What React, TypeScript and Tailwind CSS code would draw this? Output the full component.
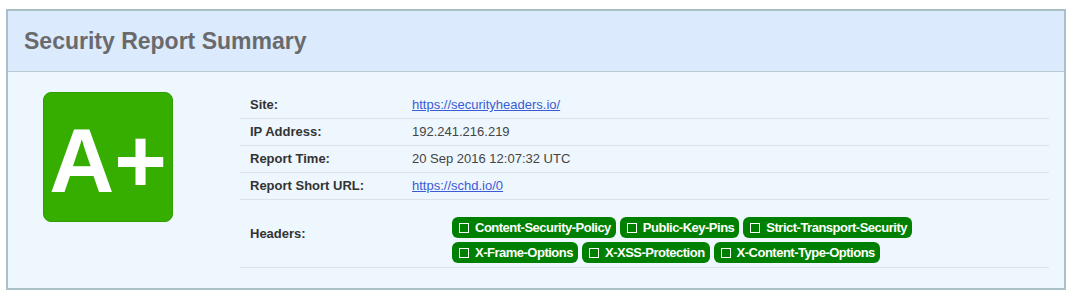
import React from "react";

const headerRows: string[][] = [
  ["Content-Security-Policy", "Public-Key-Pins", "Strict-Transport-Security"],
  ["X-Frame-Options", "X-XSS-Protection", "X-Content-Type-Options"],
];

const HeaderBadge = ({ name }: { name: string }) => (
  <span className="flex items-center h-[21px] rounded-[6px] bg-[#008000] pl-[7px] pr-[5px] text-white text-[13px] font-bold tracking-[-0.5px] whitespace-nowrap">
    <span className="inline-block w-[10px] h-[10px] border border-white mr-[6px]" />
    {name}
  </span>
);

const InfoRow = ({ label, children }: { label: string; children: React.ReactNode }) => (
  <div className="flex h-[27px] border-b border-[#dde1e4] items-center">
    <div className="w-[162px] px-[10px] font-bold text-[#333]">{label}</div>
    <div className="flex-1 px-[10px] text-[#444]">{children}</div>
  </div>
);

export default function App() {
  return (
    <div className="pt-[9px] pl-[6px] font-['Liberation_Sans',Arial,sans-serif]">
      <div className="w-[1060px] h-[281px] border-2 border-[#a9c0c4] bg-[#eef6fe]">
        {/* Panel heading */}
        <div className="h-[61px] bg-[#dbebfd] border-b border-[#b7cbd2] flex items-center pl-[16px]">
          <h2 className="text-[23px] font-bold text-[#6a6a6d]">Security Report Summary</h2>
        </div>

        {/* Panel body */}
        <div className="flex items-start pt-[20px] pl-[35px] pr-[15px]">
          <div className="w-[130px] h-[130px] rounded-[8px] bg-[#36ae00] border border-[#2f9e00] flex items-center justify-center pt-[7px]">
            <span className="text-white font-bold text-[90px] leading-none">A+</span>
          </div>

          <div className="ml-[67px] flex-1 text-[13px]">
            <InfoRow label="Site:">
              <a href="#" className="text-[#3b5bd6] underline">https://securityheaders.io/</a>
            </InfoRow>
            <InfoRow label="IP Address:">192.241.216.219</InfoRow>
            <InfoRow label="Report Time:">20 Sep 2016 12:07:32 UTC</InfoRow>
            <InfoRow label="Report Short URL:">
              <a href="#" className="text-[#3b5bd6] underline">https://schd.io/0</a>
            </InfoRow>
            <div className="flex h-[68px] border-b border-[#dde1e4] items-center">
              <div className="w-[162px] px-[10px] font-bold text-[#333]">Headers:</div>
              <div className="flex-1 pl-[50px] pt-[17px] pb-[4px] flex flex-col gap-[4px]">
                {headerRows.map((row, i) => (
                  <div key={i} className="flex gap-[4px]">
                    {row.map((h) => (
                      <HeaderBadge key={h} name={h} />
                    ))}
                  </div>
                ))}
              </div>
            </div>
          </div>
        </div>
      </div>
    </div>
  );
}
